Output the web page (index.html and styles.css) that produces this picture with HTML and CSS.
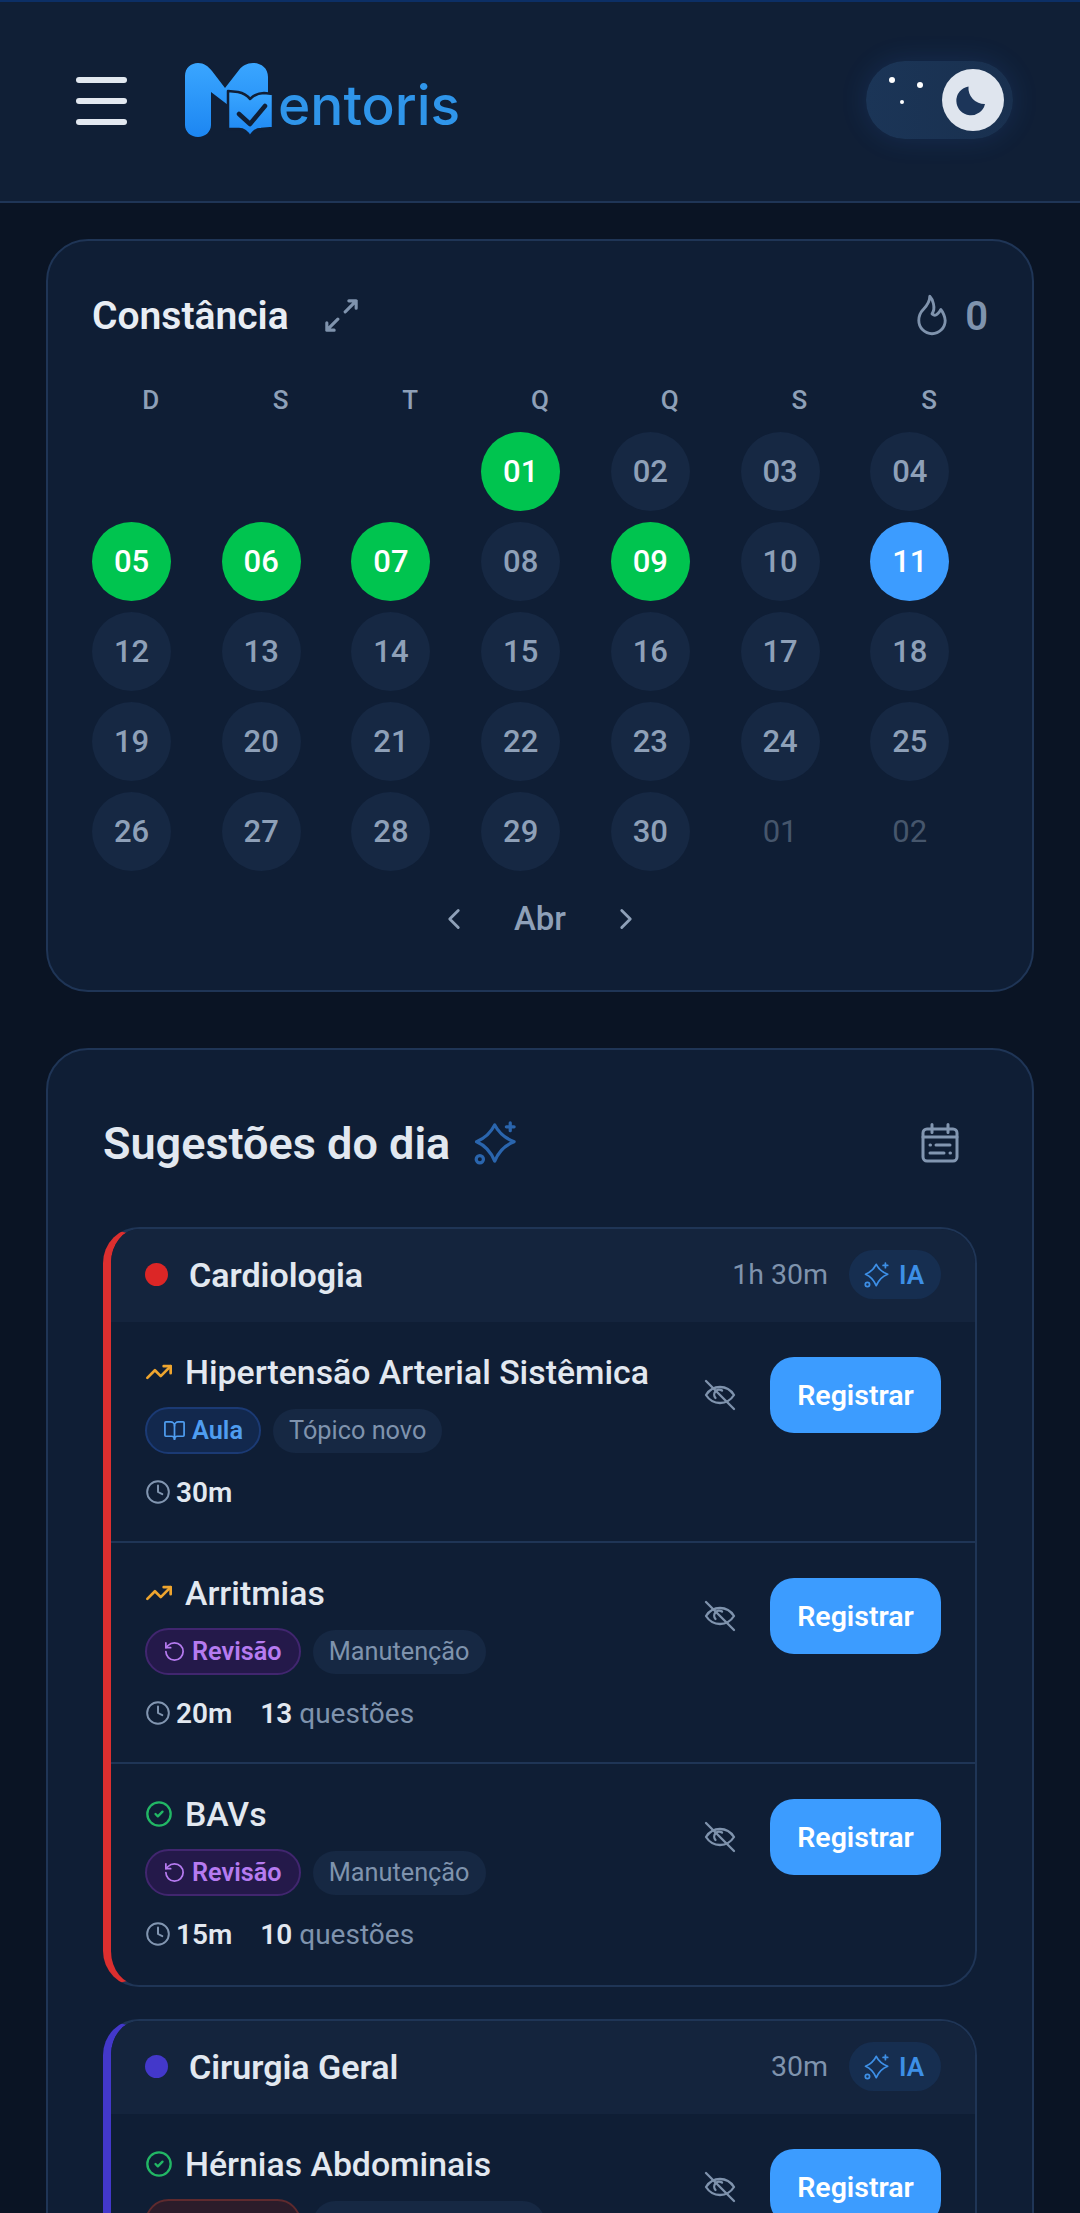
FILE: index.html
```html
<!DOCTYPE html>
<html lang="pt-BR">
<head>
    <meta charset="UTF-8">
    <meta name="viewport" content="width=device-width, initial-scale=1.0">
    <title>Mentoris</title>
    <link rel="stylesheet" href="styles.css">
</head>
<body>
    <svg class="sprite" width="0" height="0">
        <symbol id="i-sparkle" viewBox="0 0 34 34"><path d="M16 3Q20.500 12 31 16 20.500 20 16 31 11.500 20 2 16 11.500 12 16 3z"/><path d="M28 1.500v6M25 4.500h6"/><circle cx="4.500" cy="29.500" r="2.800"/></symbol>
        <symbol id="i-eye-off" viewBox="0 0 32 32"><path d="M2 16c3.500-5.500 8.500-8 14-8s10.500 2.500 14 8c-3.500 5.500-8.500 8-14 8s-10.500-2.500-14-8z"/><path d="M11.500 19a5 5 0 0 1 6.500-7.500"/><path d="M2 2l28 28"/></symbol>
        <symbol id="i-trend" viewBox="0 0 24 24"><path d="M22 7l-8.500 8.500-5-5L2 17"/><path d="M16 7h6v6"/></symbol>
        <symbol id="i-book" viewBox="0 0 24 24"><path d="M12 7v14"/><path d="M3 18a1 1 0 0 1-1-1V4a1 1 0 0 1 1-1h5a4 4 0 0 1 4 4 4 4 0 0 1 4-4h5a1 1 0 0 1 1 1v13a1 1 0 0 1-1 1h-6a3 3 0 0 0-3 3 3 3 0 0 0-3-3z"/></symbol>
        <symbol id="i-rotate" viewBox="0 0 24 24"><path d="M3 12a9 9 0 1 0 9-9 9.750 9.750 0 0 0-6.740 2.740L3 8"/><path d="M3 3v5h5"/></symbol>
        <symbol id="i-clock" viewBox="0 0 24 24"><circle cx="12" cy="12" r="10"/><path d="M12 6v6l4 2"/></symbol>
        <symbol id="i-check" viewBox="0 0 24 24"><circle cx="12" cy="12" r="10"/><path d="M9 12l2 2 4-4"/></symbol>
    </svg>

    <header class="topbar">
        <div class="topbar-left">
            <div class="burger"><span></span><span></span><span></span></div>
            <div class="logo">
                <svg class="logo-mark" width="92" height="78" viewBox="0 0 92 78">
                    <defs>
                        <linearGradient id="logoBlue" x1="0" y1="0" x2="0" y2="1"><stop offset="0" stop-color="#3aa6ff"/><stop offset="1" stop-color="#1c86f2"/></linearGradient>
                    </defs>
                    <path fill="url(#logoBlue)" d="M1 15C1 7 7 2 14 2c6 0 10 3 14 8l13 17L55 9c3-4 8-7 14-7 8 0 15 5 15 14v28H44L27 31v33c0 7-6 12-13 12S1 71 1 64z"/>
                    <path fill="url(#logoBlue)" stroke="#101f36" stroke-width="2.500" d="M44 30l10 1c5 1 9 3 12 7 4-4 9-6 14-6l9 1v34l-12 1c-4 0-8 2-11 8-3-6-7-8-11-8H44z"/>
                    <path fill="none" stroke="#101f36" stroke-width="4.500" stroke-linecap="round" stroke-linejoin="round" d="M55 53l11 10 15-18"/>
                </svg>
                <span class="logo-text">entoris</span>
            </div>
        </div>
        <div class="theme-toggle">
            <svg width="147" height="78" viewBox="0 0 147 78">
                <circle cx="26" cy="19" r="3" fill="#fff"/>
                <circle cx="54" cy="24" r="3" fill="#fff"/>
                <circle cx="36" cy="41" r="2" fill="#fff"/>
                <circle cx="107" cy="39" r="31" fill="#dfe5ee"/>
                <path fill="#1c3559" d="M102.500 25.500A14.500 14.500 0 1 0 119 43 16 16 0 0 1 102.500 25.500z"/>
            </svg>
        </div>
    </header>

    <main class="content">
        <section class="card streak">
            <div class="streak-head">
                <div class="streak-title">
                    <h2>Constância</h2>
                    <svg class="icon-expand" viewBox="3 3 18 18"><path d="M16 4h4v4M14 10l6-6M8 20H4v-4M4 20l6-6"/></svg>
                </div>
                <div class="streak-count">
                    <svg class="icon-flame" viewBox="5 2.500 14 20"><path d="M12 12c2-2.960 0-7-1-8 0 3.038-1.773 4.741-3 6-1.226 1.260-2 3.240-2 5a6 6 0 1 0 12 0c0-1.532-1.056-3.940-2-5-1.786 3-2.791 3-4 2z"/></svg>
                    <span>0</span>
                </div>
            </div>

            <div class="weekdays">
                <span>D</span><span>S</span><span>T</span><span>Q</span><span>Q</span><span>S</span><span>S</span>
            </div>
            <div class="days">
                <span class="day blank"></span><span class="day blank"></span><span class="day blank"></span>
                <span class="day done">01</span><span class="day">02</span><span class="day">03</span><span class="day">04</span>
                <span class="day done">05</span><span class="day done">06</span><span class="day done">07</span><span class="day">08</span>
                <span class="day done">09</span><span class="day">10</span><span class="day today">11</span>
                <span class="day">12</span><span class="day">13</span><span class="day">14</span><span class="day">15</span>
                <span class="day">16</span><span class="day">17</span><span class="day">18</span>
                <span class="day">19</span><span class="day">20</span><span class="day">21</span><span class="day">22</span>
                <span class="day">23</span><span class="day">24</span><span class="day">25</span>
                <span class="day">26</span><span class="day">27</span><span class="day">28</span><span class="day">29</span>
                <span class="day">30</span><span class="day other">01</span><span class="day other">02</span>
            </div>
            <div class="month-nav">
                <svg viewBox="0 0 24 24"><path d="M15 18l-6-6 6-6"/></svg>
                <span>Abr</span>
                <svg viewBox="0 0 24 24"><path d="M9 18l6-6-6-6"/></svg>
            </div>
        </section>

        <section class="card suggestions">
            <div class="suggestions-head">
                <div class="suggestions-title">
                    <h2>Sugestões do dia</h2>
                    <svg class="icon-sparkle"><use href="#i-sparkle"/></svg>
                </div>
                <svg class="icon-calendar" viewBox="0 0 38 40">
                    <rect x="2" y="6" width="34" height="32" rx="4"/>
                    <path d="M11 1.500v8M27 1.500v8M2 14h34M15 22h14M9 30h14"/>
                    <path d="M9 22h.5M29 30h.5"/>
                </svg>
            </div>

            <article class="subject subject-red">
                <div class="subject-head">
                    <div class="subject-name"><span class="dot"></span><h3>Cardiologia</h3></div>
                    <div class="subject-side">
                        <span class="subject-time">1h 30m</span>
                        <span class="ia-tag"><svg><use href="#i-sparkle"/></svg>IA</span>
                    </div>
                </div>

                <div class="topic">
                    <div class="topic-info">
                        <div class="topic-title"><svg class="trend"><use href="#i-trend"/></svg><h4>Hipertensão Arterial Sistêmica</h4></div>
                        <div class="tags">
                            <span class="tag tag-blue"><svg><use href="#i-book"/></svg>Aula</span>
                            <span class="tag tag-muted">Tópico novo</span>
                        </div>
                        <div class="meta">
                            <svg><use href="#i-clock"/></svg><b>30m</b>
                        </div>
                    </div>
                    <div class="topic-actions">
                        <svg class="eye"><use href="#i-eye-off"/></svg>
                        <button class="register">Registrar</button>
                    </div>
                </div>

                <div class="topic">
                    <div class="topic-info">
                        <div class="topic-title"><svg class="trend"><use href="#i-trend"/></svg><h4>Arritmias</h4></div>
                        <div class="tags">
                            <span class="tag tag-purple"><svg><use href="#i-rotate"/></svg>Revisão</span>
                            <span class="tag tag-muted">Manutenção</span>
                        </div>
                        <div class="meta">
                            <svg><use href="#i-clock"/></svg><b>20m</b>
                            <span class="questions"><b>13</b> questões</span>
                        </div>
                    </div>
                    <div class="topic-actions">
                        <svg class="eye"><use href="#i-eye-off"/></svg>
                        <button class="register">Registrar</button>
                    </div>
                </div>

                <div class="topic">
                    <div class="topic-info">
                        <div class="topic-title"><svg class="ok"><use href="#i-check"/></svg><h4>BAVs</h4></div>
                        <div class="tags">
                            <span class="tag tag-purple"><svg><use href="#i-rotate"/></svg>Revisão</span>
                            <span class="tag tag-muted">Manutenção</span>
                        </div>
                        <div class="meta">
                            <svg><use href="#i-clock"/></svg><b>15m</b>
                            <span class="questions"><b>10</b> questões</span>
                        </div>
                    </div>
                    <div class="topic-actions">
                        <svg class="eye"><use href="#i-eye-off"/></svg>
                        <button class="register">Registrar</button>
                    </div>
                </div>
            </article>

            <article class="subject subject-indigo">
                <div class="subject-head">
                    <div class="subject-name"><span class="dot"></span><h3>Cirurgia Geral</h3></div>
                    <div class="subject-side">
                        <span class="subject-time">30m</span>
                        <span class="ia-tag"><svg><use href="#i-sparkle"/></svg>IA</span>
                    </div>
                </div>

                <div class="topic">
                    <div class="topic-info">
                        <div class="topic-title"><svg class="ok"><use href="#i-check"/></svg><h4>Hérnias Abdominais</h4></div>
                        <div class="tags">
                            <span class="tag tag-red"></span>
                            <span class="tag tag-muted tag-empty"></span>
                        </div>
                    </div>
                    <div class="topic-actions">
                        <svg class="eye"><use href="#i-eye-off"/></svg>
                        <button class="register">Registrar</button>
                    </div>
                </div>
            </article>
        </section>
    </main>
</body>
</html>
```

FILE: styles.css
```css
* { box-sizing: border-box; }
html, body { margin: 0; height: 2213px; overflow: hidden; }
body { font-family: Roboto, "Liberation Sans", sans-serif; background: #0a1424; color: #e2e8f0; }
h2, h3, h4 { margin: 0; }
.sprite { position: absolute; }
svg { fill: none; stroke: currentColor; stroke-linecap: round; stroke-linejoin: round; flex-shrink: 0; }

/* top bar */
.topbar { height: 203px; display: flex; align-items: center; justify-content: space-between; padding: 0 67px 4px 76px; background: #101f36; border-top: 2px solid #0c2f66; border-bottom: 2px solid #1f3556; }
.topbar-left { display: flex; align-items: center; gap: 57px; }
.burger { width: 51px; margin-top: 2px; display: flex; flex-direction: column; gap: 15px; }
.burger span { height: 6px; border-radius: 3px; background: #e2e8f0; }
.logo { display: flex; align-items: flex-end; }
.logo svg { stroke: none; }
.logo-mark { margin-right: 2px; }
.logo-text { font-family: Inter, sans-serif; font-size: 55px; font-weight: 500; line-height: 64px; margin-bottom: 2px; color: #2f95ea; }
.theme-toggle { width: 147px; height: 78px; border-radius: 39px; background: linear-gradient(90deg, #1b3557, #19304f); box-shadow: 0 0 28px rgba(59, 130, 246, 0.14); }
.theme-toggle svg { stroke: none; display: block; }

.content { padding: 36px 46px 0; display: flex; flex-direction: column; gap: 56px; }
.card { background: #0f1e35; border: 2px solid #1f3556; border-radius: 42px; }

/* calendar */
.streak { padding: 46px 44px 51px; }
.streak-head { display: flex; justify-content: space-between; align-items: center; height: 58px; }
.streak-title { display: flex; align-items: center; gap: 36px; }
.streak-title h2 { font-size: 39px; font-weight: 600; color: #e8edf4; }
.icon-expand { width: 33px; height: 33px; color: #7f93ad; stroke-width: 1.700; margin-top: -2px; }
.streak-count { display: flex; align-items: center; gap: 17px; color: #7f93ad; font-size: 40px; font-weight: 600; }
.icon-flame { width: 32px; height: 44px; stroke-width: 1.300; margin-top: -2px; }
.weekdays, .days { display: grid; grid-template-columns: repeat(7, 1fr); column-gap: 12px; }
.weekdays { margin-top: 41px; height: 28px; text-align: center; font-size: 26px; font-weight: 500; line-height: 28px; color: #8ea0b8; }
.days { margin-top: 18px; row-gap: 11px; }
.day { width: 79px; height: 79px; border-radius: 50%; display: flex; align-items: center; justify-content: center; background: #162843; color: #8ea0b8; font-size: 31px; font-weight: 500; }
.day.blank { background: none; }
.day.done { background: #00c44f; color: #fff; }
.day.today { background: #3c9cff; color: #fff; }
.day.other { background: none; color: #46566c; font-weight: 400; }
.month-nav { margin-top: 27px; height: 41px; display: flex; align-items: center; justify-content: center; gap: 39px; color: #8ea0b8; font-size: 33px; font-weight: 500; }
.month-nav svg { width: 34px; height: 34px; stroke-width: 2; }
.month-nav span { width: 60px; text-align: center; }

/* suggestions */
.suggestions { padding: 0 55px 60px; }
.suggestions-head { display: flex; justify-content: space-between; align-items: center; height: 177px; padding-right: 18px; padding-top: 9px; }
.suggestions-title { display: flex; align-items: center; gap: 24px; }
.suggestions-title h2 { font-size: 45px; font-weight: 600; color: #e2e8f0; }
.icon-sparkle { width: 44px; height: 44px; color: #2a65ad; stroke-width: 2.500; }
.icon-calendar { width: 38px; height: 40px; color: #8296b1; stroke-width: 3; }

.subject { margin-bottom: 32px; border: 2px solid #1f3556; border-left: 8px solid; border-radius: 36px; overflow: hidden; }
.subject-red { border-left-color: #dc2f2f; }
.subject-indigo { border-left-color: #4338ca; }
.subject-red .dot { background: #dc2626; }
.subject-indigo .dot { background: #4338ca; }
.subject-head { height: 93px; display: flex; justify-content: space-between; align-items: center; padding: 0 34px 2px 34px; background: #14243d; }
.subject-name { display: flex; align-items: center; gap: 21px; }
.dot { width: 23px; height: 23px; border-radius: 50%; }
.subject-name h3 { font-size: 34px; font-weight: 600; color: #e2e8f0; }
.subject-side { display: flex; align-items: center; gap: 21px; }
.subject-time { font-size: 28.5px; color: #7f93ad; }
.ia-tag { height: 49px; padding: 0 17px 0 15px; display: flex; align-items: center; gap: 9px; border-radius: 25px; background: #162e50; color: #3d8fe6; font-size: 26px; font-weight: 600; }
.ia-tag svg { width: 26px; height: 26px; stroke-width: 2.300; }

.topic { display: flex; justify-content: space-between; height: 221px; padding: 30px 34px 0 34px; border-bottom: 2px solid #1f3556; }
.topic:last-child { border-bottom: 0; }
.topic-title { display: flex; align-items: center; gap: 12px; height: 40px; }
.topic-title h4 { font-size: 33.8px; font-weight: 550; color: #e2e8f0; white-space: nowrap; }
.trend { width: 28px; height: 28px; color: #eea52f; stroke-width: 2.300; }
.ok { width: 28px; height: 28px; color: #22b765; stroke-width: 2; }
.tags { display: flex; align-items: center; gap: 12px; margin-top: 15px; height: 47px; }
.tag { display: flex; align-items: center; gap: 6px; border-radius: 24px; font-size: 25.3px; white-space: nowrap; }
.tag svg { width: 23px; height: 23px; stroke-width: 1.800; }
.tag-muted { height: 44px; padding: 0 16px; background: #162843; color: #7f93ad; }
.tag-blue { height: 47px; padding: 0 16px; background: #12284d; border: 2px solid #1b3a74; color: #4f9df0; font-weight: 600; }
.tag-purple { height: 47px; padding: 0 17px 0 16px; gap: 6px; background: #24194a; border: 2px solid #41266f; color: #b67bf0; font-weight: 600; }
.tag-red { height: 47px; width: 156px; background: #2b1c2a; border: 2px solid #5e2a2e; }
.tag-empty { width: 232px; }
.meta { margin-top: 22px; height: 32px; display: flex; align-items: center; font-size: 28px; color: #7f93ad; }
.meta svg { width: 26px; height: 26px; margin-right: 5px; stroke-width: 1.800; color: #8296b1; }
.meta b { font-weight: 600; color: #e2e8f0; }
.questions { margin-left: 28px; }
.topic-actions { display: flex; align-items: center; gap: 34px; height: 76px; margin-top: 5px; }
.eye { width: 32px; height: 32px; color: #7f93ad; stroke-width: 2.300; }
.register { width: 171px; height: 76px; border: 0; border-radius: 24px; background: #3c9cff; color: #fff; font-family: inherit; font-size: 28.5px; font-weight: 600; }
```
